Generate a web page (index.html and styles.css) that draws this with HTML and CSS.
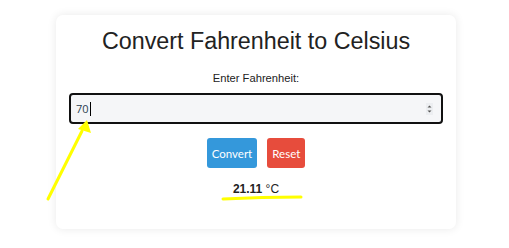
FILE: index.html
```html
<!DOCTYPE html>
<html lang="en">
<head>
<meta charset="utf-8">
<title>Fahrenheit to Celsius</title>
<link rel="stylesheet" href="styles.css">
</head>
<body>
<main class="card">
  <h1 class="title">Convert Fahrenheit to Celsius</h1>
  <label class="label" for="f">Enter Fahrenheit:</label>
  <div class="field" id="f">
    <span class="value">70</span><span class="caret"></span>
    <span class="spacer"></span>
    <svg class="spin" width="7" height="12" viewBox="0 0 7 12">
      <rect x="0" y="0" width="7" height="12" fill="#eceef1"/>
      <path d="M1.5 4.5 L3.5 2.5 L5.5 4.5 Z" fill="#555"/>
      <path d="M1.5 7.5 L3.5 9.5 L5.5 7.5 Z" fill="#555"/>
    </svg>
  </div>
  <div class="actions">
    <button class="btn btn-convert">Convert</button>
    <button class="btn btn-reset">Reset</button>
  </div>
  <p class="result"><strong>21.11</strong> °C</p>
</main>
<svg class="marks" width="509" height="248" viewBox="0 0 509 248">
  <line x1="48" y1="199" x2="82" y2="131" stroke="#ffff00" stroke-width="3" stroke-linecap="round"/>
  <polygon points="87,120 91,133 78,129" fill="#ffff00"/>
  <path d="M223 199 Q262 197 301 197" stroke="#ffff00" stroke-width="3" fill="none" stroke-linecap="round"/>
</svg>
</body>
</html>
```
FILE: styles.css
```css
html, body {
  margin: 0;
  padding: 0;
  background: #ffffff;
}
body {
  font-family: "Liberation Sans", Arial, sans-serif;
  color: #222;
  width: 509px;
  height: 248px;
  overflow: hidden;
  position: relative;
}
.card {
  box-sizing: border-box;
  width: 400px;
  margin: 15px 0 0 56px;
  padding: 12px 13px 32px;
  background: #fff;
  border-radius: 7px;
  box-shadow: 0 0 10px rgba(0, 0, 0, 0.09);
  display: flex;
  flex-direction: column;
  align-items: center;
}
.title {
  margin: 0;
  font-size: 23.3px;
  line-height: 28px;
  font-weight: normal;
  color: #222;
}
.label {
  margin-top: 16px;
  font-size: 11.2px;
  line-height: 15px;
  color: #222;
}
.field {
  box-sizing: border-box;
  align-self: stretch;
  margin-top: 7px;
  height: 31px;
  border: 2px solid #111;
  border-radius: 4px;
  background: #f5f6f8;
  display: flex;
  align-items: center;
  padding: 0 8px 0 5px;
  font-family: "Open Sans", sans-serif;
  font-size: 11px;
  color: #2c3e50;
}
.caret {
  width: 1px;
  height: 14px;
  background: #000;
  margin-left: 1px;
}
.spacer { flex: 1; }
.spin { display: block; }
.actions {
  margin-top: 14px;
  display: flex;
  gap: 10px;
}
.btn {
  height: 30px;
  border: none;
  border-radius: 3px;
  padding: 0 5px;
  color: #fff;
  font-family: Lato, sans-serif;
  font-size: 11.5px;
  cursor: pointer;
}
.btn-convert { background: #3498db; }
.btn-reset { background: #e74c3c; }
.result {
  margin: 14px 0 0;
  font-size: 12px;
  line-height: 15px;
  color: #222;
}
.marks {
  position: absolute;
  left: 0;
  top: 0;
  pointer-events: none;
}
```
